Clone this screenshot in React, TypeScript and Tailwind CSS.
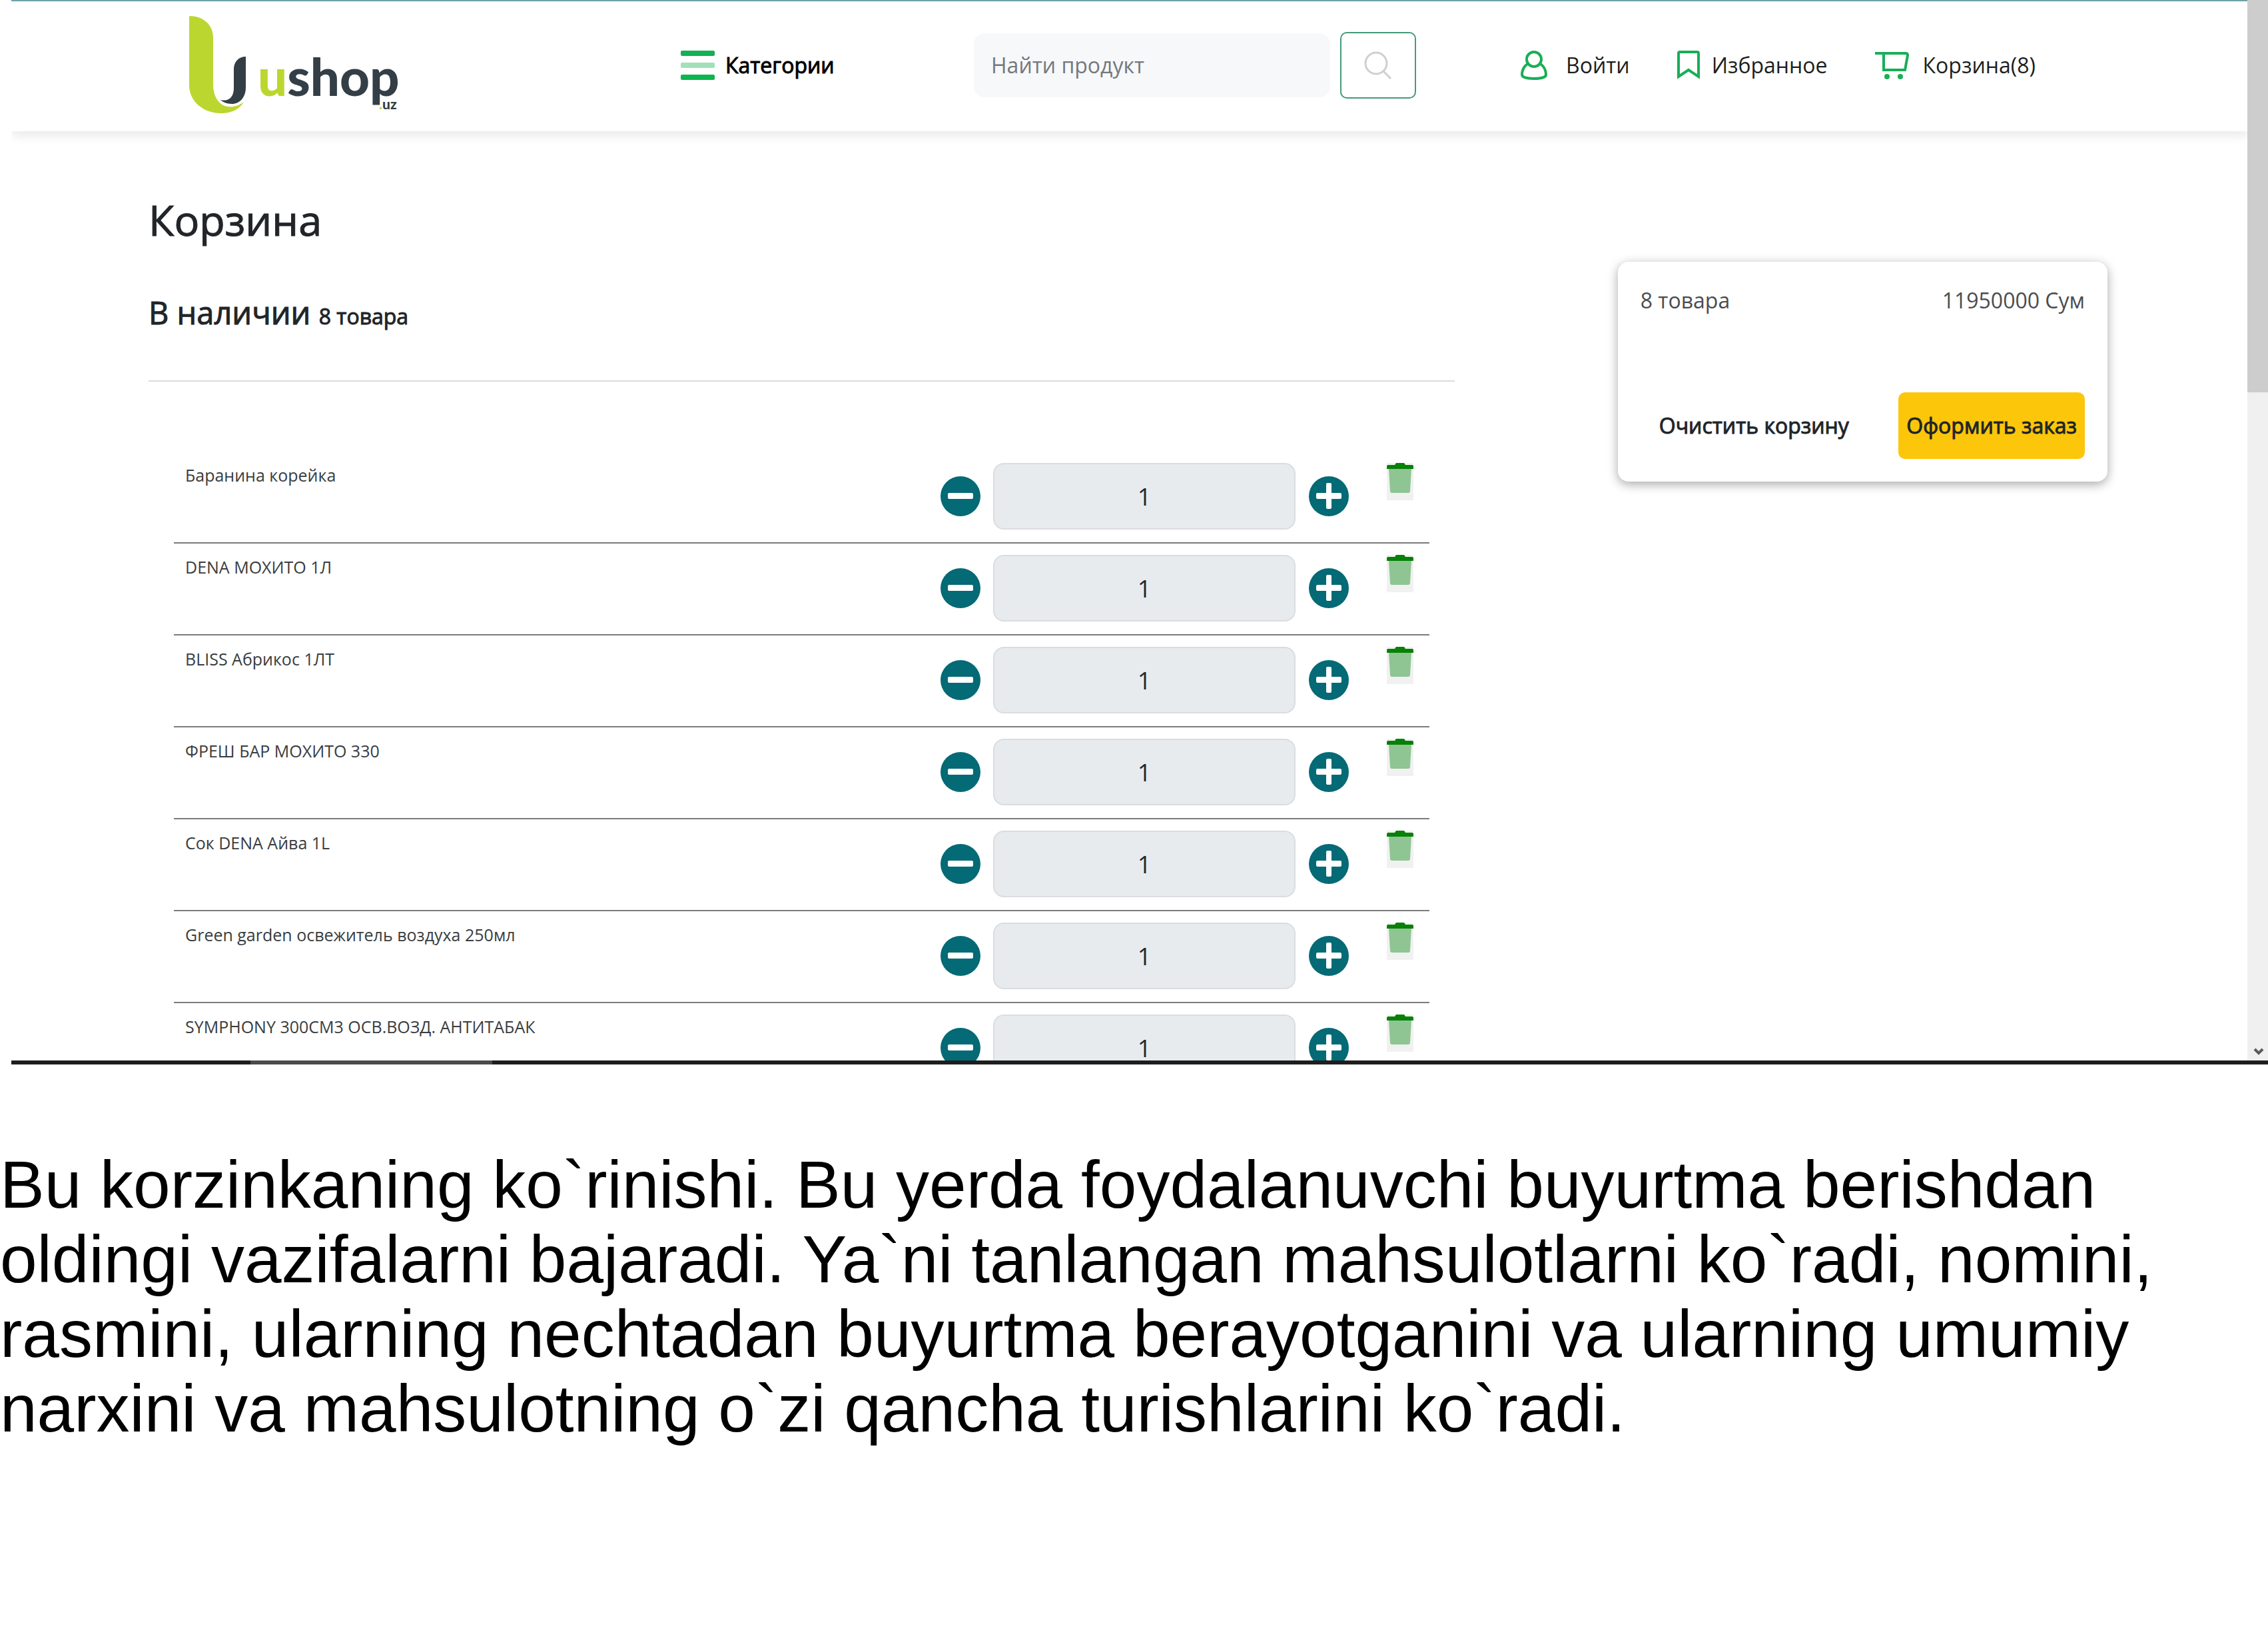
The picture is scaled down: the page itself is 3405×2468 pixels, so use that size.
import React from "react";

const products = [
  "Баранина корейка",
  "DENA МОХИТО 1Л",
  "BLISS Абрикос 1ЛТ",
  "ФРЕШ БАР МОХИТО 330",
  "Сок DENA Айва 1L",
  "Green garden освежитель воздуха 250мл",
  "SYMPHONY 300СМ3 ОСВ.ВОЗД. АНТИТАБАК",
];

function Logo() {
  return (
    <svg viewBox="0 0 318 150" className="h-[150px] w-[318px]" role="img" aria-label="ushop.uz">
      <path
        d="M0 1C21 1 36 14 36 33V103C36 121 44 135 58 137C67 138 74 136 82 130C76 141 63 147 48 147C20 147 0 128 0 105Z"
        fill="#bcd630"
      />
      <path
        d="M85 62V108C85 123 76 133 64 133C57 133 50 130 47 127C55 129 67 127 67 109V81C67 70 74 62 85 62Z"
        fill="#333e46"
      />
      <text x="103" y="121" fontFamily="Lato" fontWeight="900" fontSize="78" fill="#333e46">
        <tspan fill="#bcd630">u</tspan>shop
        <tspan x="285" y="141" fontSize="21" fill="#bcd630">.</tspan>
        <tspan fontSize="21">uz</tspan>
      </text>
    </svg>
  );
}

function SearchIcon() {
  return (
    <svg viewBox="0 0 42 42" className="size-[42px]" fill="none" stroke="#cfcfcf" strokeWidth="3">
      <circle cx="18" cy="18" r="16" />
      <path d="M29 30L40 41" />
    </svg>
  );
}

function UserIcon() {
  return (
    <svg viewBox="0 0 40 44" className="h-[44px] w-[40px]" fill="none" stroke="#19ae57" strokeWidth="4">
      <ellipse cx="20" cy="13" rx="11" ry="11" />
      <path d="M10 20C5 24 2 30 2 36C2 40 9 42 20 42C31 42 38 40 38 36C38 30 35 24 30 20" strokeLinejoin="round" />
    </svg>
  );
}

function BookmarkIcon() {
  return (
    <svg viewBox="0 0 34 44" className="h-[44px] w-[34px]" fill="none" stroke="#19ae57" strokeWidth="4">
      <path d="M2 39V4Q2 2 4 2H30Q32 2 32 4V39L17 29Z" />
    </svg>
  );
}

function CartIcon() {
  return (
    <svg viewBox="0 0 51 44" className="h-[44px] w-[51px]" fill="none" stroke="#19ae57" strokeWidth="4">
      <path d="M0 4H46Q49 4 49 7L45 29H13V4" />
      <circle cx="18" cy="39" r="4" fill="#19ae57" stroke="none" />
      <circle cx="38" cy="39" r="4" fill="#19ae57" stroke="none" />
    </svg>
  );
}

function RoundIcon({ plus }: { plus?: boolean }) {
  return (
    <svg viewBox="0 0 60 60" className="size-[60px]">
      <circle cx="30" cy="30" r="30" fill="#046a75" />
      <rect x="11" y="25" width="38" height="9" rx="2" fill="#fff" />
      {plus && <rect x="26" y="10" width="8" height="39" rx="2" fill="#fff" />}
    </svg>
  );
}

function TrashIcon() {
  return (
    <svg viewBox="0 0 40 56" className="h-[56px] w-[40px]">
      <rect width="40" height="56" fill="#f1f1f1" />
      <path d="M3 9H37L35 42Q35 45 32 45H8Q5 45 5 42Z" fill="#8fc593" />
      <path d="M0 9V5Q0 3 2 3H12L14 0H26L28 3H38Q40 3 40 5V9Z" fill="#078107" />
    </svg>
  );
}

function Header() {
  return (
    <header className="grid h-[195px] grid-cols-[738fr_440fr_821fr_1091fr] items-center bg-white pb-[4px] pl-[267px] text-[32px] text-[#1c1f21] shadow-[0_8px_14px_rgba(0,0,0,0.08)]">
      <a href="#home">
        <Logo />
      </a>
      <button type="button" className="flex items-center gap-[16px] text-black [-webkit-text-stroke:1px]">
        <span className="flex w-[51px] flex-col gap-[10px]">
          <span className="h-[8px] rounded-[2px] bg-[#14b053]" />
          <span className="h-[8px] rounded-[2px] bg-[#a1e0b9]" />
          <span className="h-[8px] rounded-[2px] bg-[#0cb64f]" />
        </span>
        Категории
      </button>
      <form className="flex items-center gap-[15px]" onSubmit={(e) => e.preventDefault()}>
        <input
          type="search"
          aria-label="Найти продукт"
          placeholder="Найти продукт"
          className="h-[96px] w-[535px] rounded-[16px] bg-[#f7f8fa] px-[26px] placeholder:text-[#74787c]"
        />
        <button
          type="submit"
          aria-label="Поиск"
          className="flex h-[100px] w-[114px] items-center justify-center rounded-[10px] border-2 border-[#459a78]"
        >
          <SearchIcon />
        </button>
      </form>
      <nav className="flex items-center gap-[71px]">
        <a href="#login" className="flex items-center gap-[28px]">
          <UserIcon />
          Войти
        </a>
        <a href="#favorites" className="flex items-center gap-[18px]">
          <BookmarkIcon />
          Избранное
        </a>
        <a href="#cart" className="flex items-center gap-[21px]">
          <CartIcon />
          Корзина(8)
        </a>
      </nav>
    </header>
  );
}

function CartRow({ name }: { name: string }) {
  return (
    <li className="flex border-b-2 border-[#7b7b7b] pt-[17px] pr-[24px] pb-[19px] pl-[17px]">
      <span className="flex-1 text-[25px] leading-[36px] text-[#3a3d40]">{name}</span>
      <div className="flex w-[613px] items-center justify-between">
        <button type="button" aria-label="Уменьшить количество">
          <RoundIcon />
        </button>
        <input
          readOnly
          value="1"
          aria-label={name}
          className="h-[100px] w-[454px] rounded-[16px] border-2 border-[#d9dde1] bg-[#e7ebee] text-center text-[36px] text-[#212529]"
        />
        <button type="button" aria-label="Увеличить количество">
          <RoundIcon plus />
        </button>
      </div>
      <button type="button" aria-label="Удалить" className="ml-[57px] self-start">
        <TrashIcon />
      </button>
    </li>
  );
}

function Summary() {
  return (
    <aside className="mt-[196px] w-1/4 self-start rounded-[16px] bg-white p-[34px] text-[32px] leading-[48px] text-[#212529] shadow-[0_4px_16px_rgba(0,0,0,0.35)]">
      <div className="flex justify-between text-[#4a4d50]">
        <span>8 товара</span>
        <span>11950000 Сум</span>
      </div>
      <div className="mt-[114px] flex items-center justify-between pl-[28px] [-webkit-text-stroke:1px]">
        <button type="button">Очистить корзину</button>
        <button type="button" className="h-[100px] rounded-[10px] bg-[#fcc60b] px-[12px]">
          Оформить заказ
        </button>
      </div>
    </aside>
  );
}

export default function App() {
  return (
    <div className="bg-white">
      <div className="pl-[17px] font-['Open_Sans',sans-serif]">
        <div className="flex max-h-[1592px] overflow-hidden">
          <div className="min-w-0 flex-1 border-t-2 border-[#6fa3a9]">
            <Header />
            <main className="flex justify-between pr-[210px] pl-[206px]">
              <section className="w-2/3 pt-[93px] text-[#212529]">
                <h1 className="text-[63px] leading-[80px] [-webkit-text-stroke:1px]">Корзина</h1>
                <h2 className="mt-[69px] text-[47px] leading-[60px] [-webkit-text-stroke:1px]">
                  В наличии <span className="text-[32px] leading-none">8 товара</span>
                </h2>
                <hr className="mt-[72px] border-t-2 border-[#dcdcdc]" />
                <ul className="mx-[38px] mt-[105px]">
                  {products.map((name) => (
                    <CartRow key={name} name={name} />
                  ))}
                </ul>
              </section>
              <Summary />
            </main>
          </div>
          <div className="flex w-[31px] flex-col justify-between bg-[#f0f0f0]">
            <div className="h-[37%] bg-[#cdcdcd]" />
            <svg viewBox="0 0 31 26" className="h-[26px] w-[31px]" fill="none" stroke="#5a5a5a" strokeWidth="4">
              <path d="M11 9L17 15L23 9" />
            </svg>
          </div>
        </div>
        <div className="h-[6px] bg-[#1e1e1e] pl-[359px]">
          <div className="h-full w-[363px] bg-[#4a4a4a]" />
        </div>
      </div>
      <p className="mt-[124px] font-['Liberation_Sans',sans-serif] text-[100px] leading-[112px] text-black">
        Bu korzinkaning ko`rinishi. Bu yerda foydalanuvchi buyurtma berishdan oldingi vazifalarni bajaradi.
        Ya`ni tanlangan mahsulotlarni ko`radi, nomini, rasmini, ularning nechtadan buyurtma berayotganini va
        ularning umumiy narxini va mahsulotning o`zi qancha turishlarini ko`radi.
      </p>
    </div>
  );
}
